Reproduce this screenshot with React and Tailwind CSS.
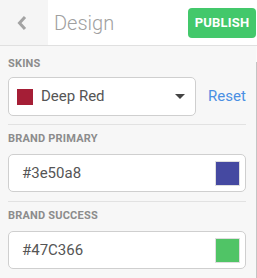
import React from 'react';

function ColorField({ label, value, swatch }) {
  return (
    <div className="pt-[7px] pb-[9px] border-b border-[#e2e2e2]">
      <div className="text-[11px] font-bold text-[#8c8c8c] leading-[13px] tracking-[0.2px] uppercase mb-[9px]">{label}</div>
      <div className="h-[38px] bg-white border border-[#cfcfcf] rounded-[5px] flex items-center justify-between pl-[13px] pr-[5px]">
        <span className="text-[15px] text-[#555]">{value}</span>
        <span className="w-[25px] h-[25px] border border-[#dedede]" style={{ backgroundColor: swatch }}></span>
      </div>
    </div>
  );
}

export default function App() {
  return (
    <div className="w-[257px] h-[278px] overflow-hidden bg-[#f7f7f7] flex flex-col" style={{ fontFamily: 'Roboto, "Liberation Sans", sans-serif' }}>
      {/* header */}
      <div className="h-[46px] shrink-0 bg-white border-b border-[#e0e0e0] flex items-stretch">
        <div className="w-[48px] bg-[#f5f5f5] flex items-center justify-center pr-[4px]">
          <svg width="12" height="16" viewBox="0 0 12 16">
            <path d="M9 2 L3.5 8 L9 14" fill="none" stroke="#a3a3a3" strokeWidth="3" />
          </svg>
        </div>
        <div className="flex-1 flex items-center pl-[6px] text-[20px] font-light text-[#a0a0a0]">Design</div>
        <div className="flex items-center pr-[1px]">
          <button className="h-[30px] w-[68px] bg-[#43c86b] rounded-[4px] text-white text-[13px] font-bold tracking-[0.2px]">PUBLISH</button>
        </div>
      </div>

      <div className="flex-1 flex">
        <div className="flex-1 pl-[8px] pr-[10px]">
          {/* skins */}
          <div className="pt-[11px] pb-[8px] border-b border-[#e2e2e2]">
            <div className="text-[11px] font-bold text-[#8c8c8c] leading-[13px] tracking-[0.2px] mb-[7px]">SKINS</div>
            <div className="flex items-center">
              <div className="w-[188px] h-[39px] bg-white border border-[#cfcfcf] rounded-[5px] flex items-center pl-[8px] pr-[10px]">
                <span className="w-[16px] h-[16px] bg-[#a51e36]"></span>
                <span className="ml-[8px] text-[15px] text-[#555] flex-1">Deep Red</span>
                <svg width="10" height="6" viewBox="0 0 10 6">
                  <path d="M0 0 L10 0 L5 5 Z" fill="#444" />
                </svg>
              </div>
              <span className="ml-[12px] text-[15px] text-[#4a8fe3]">Reset</span>
            </div>
          </div>
          <ColorField label="Brand Primary" value="#3e50a8" swatch="#4549a1" />
          <ColorField label="Brand Success" value="#47C366" swatch="#50c466" />
        </div>
        {/* scrollbar */}
        <div className="w-[4px] bg-[#fafafa] flex flex-col">
          <div className="h-[16px]"></div>
          <div className="flex-1 bg-[#c4c4c4]"></div>
        </div>
      </div>
    </div>
  );
}
